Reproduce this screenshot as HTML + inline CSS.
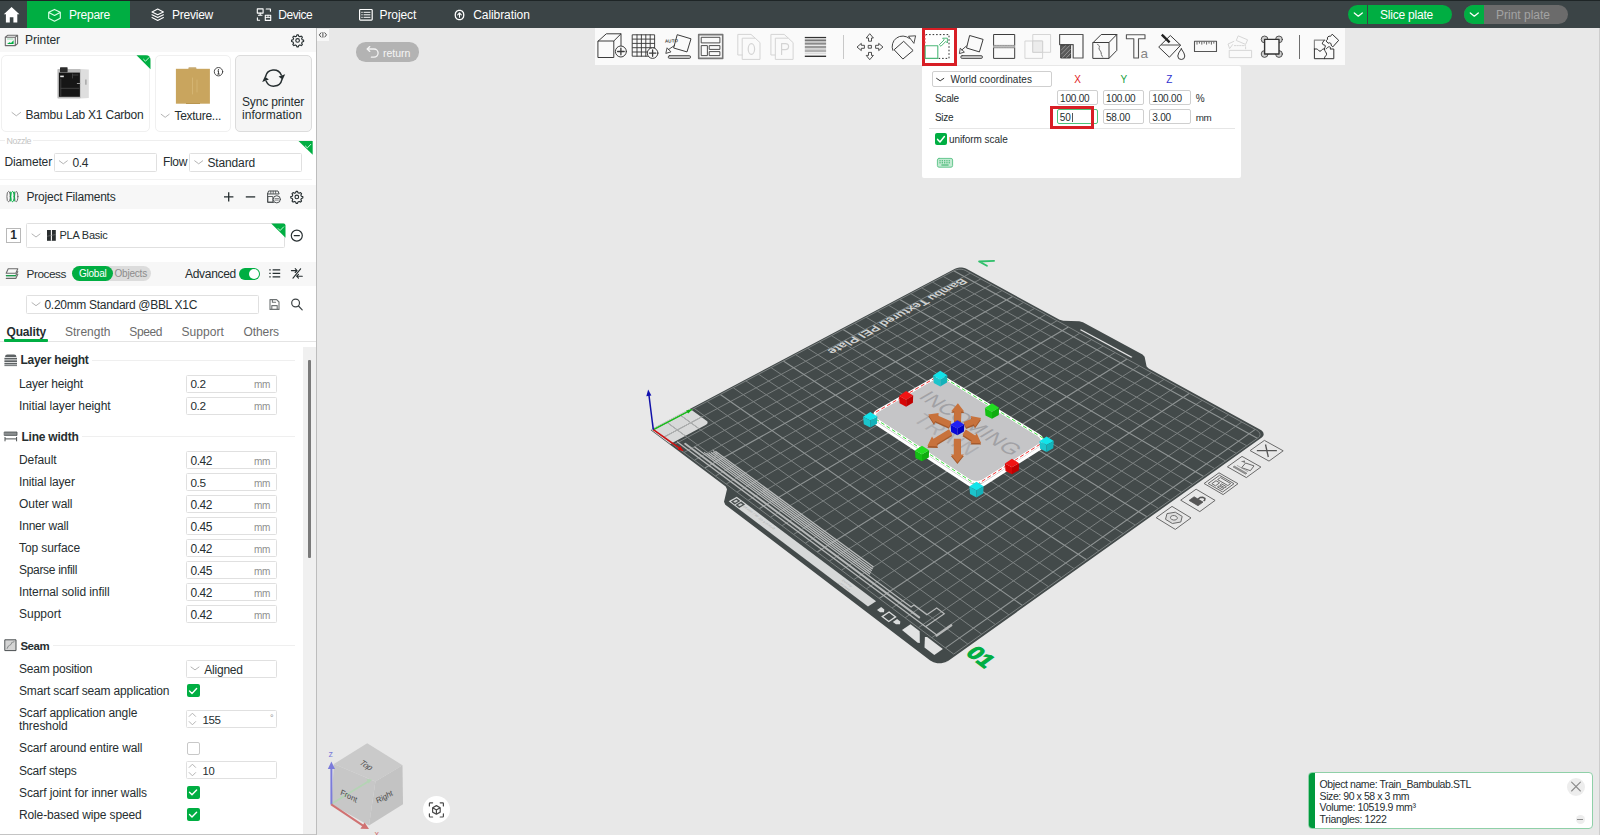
<!DOCTYPE html>
<html><head><meta charset="utf-8"><title>Bambu Studio</title>
<style>
*{box-sizing:border-box;margin:0;padding:0}
html,body{width:1600px;height:835px;overflow:hidden;background:#e8e8e8;font-family:"Liberation Sans",sans-serif;color:#262e30}
#root{position:relative;width:1600px;height:835px;overflow:hidden}
.a{position:absolute}
.t{position:absolute;white-space:nowrap;line-height:14px;height:14px}
.b{font-weight:bold}
#topbar{left:0;top:0;width:1600px;height:28px;background:#3b4446}
#side{left:0;top:28px;width:316px;height:807px;background:#fff}
.hdr{left:0;width:316px;background:#f7f7f7}
.box{border:1px solid #e0e0e0;background:#fff;border-radius:1.5px}
.card{border:1px solid #f0f0f0;background:#fff;border-radius:5px}
.chk{width:13px;height:13px;border-radius:2px;background:#00ae42}
.unchk{width:13px;height:13px;border-radius:2px;background:#fff;border:1px solid #c8c8c8}
.secline{height:1px;background:#efefef}
svg{position:absolute;overflow:visible}

</style></head><body><div id="root">
<!-- viewport -->
<svg class="a" style="left:0;top:0" width="1600" height="835" viewBox="0 0 1600 835">
<polygon points="651.0,429.6 955.0,268.7 955.0,268.7 957.1,267.9 959.5,267.5 962.0,267.5 964.4,267.9 966.4,268.8 1059.6,319.8 1063.3,320.8 1079.2,321.3 1082.9,322.2 1142.5,354.5 1144.6,356.7 1146.6,366.4 1148.7,368.5 1260.0,429.4 1262.0,430.8 1263.3,432.6 1263.7,434.4 1263.2,436.1 1261.8,437.5 944.2,663.7 948.5,660.6 945.2,662.3 941.3,663.2 937.3,663.2 933.5,662.2 930.2,660.4 725.3,504.7 724.0,501.8 727.0,489.2 725.7,486.4 650.8,430.3" fill="#434a4a"/>
<polygon points="650.8,429.4 689.9,408.7 706.5,420.7 706.5,420.7 707.3,421.4 707.6,422.4 707.4,423.3 706.7,424.2 705.6,425.0 670.3,444.0" fill="#d8d9d9"/>
<path d="M663.6,437.3L970.3,273.2M667.3,422.6L967.8,644.1M673.7,444.8L980.8,278.9M680.7,415.4L981.7,634.2M684.0,452.5L991.3,284.7M694.1,408.4L995.4,624.5M694.3,460.2L1002.0,290.5M707.2,401.4L1008.9,614.8M715.4,476.0L1023.6,302.4M733.2,387.7L1035.5,596.0M726.2,484.0L1034.6,308.4M745.9,380.9L1048.5,586.7M737.0,492.1L1045.7,314.5M758.5,374.2L1061.3,577.6M748.1,500.4L1057.0,320.7M771.0,367.6L1074.0,568.6M770.5,517.2L1079.8,333.2M795.5,354.6L1098.9,550.9M782.0,525.7L1091.5,339.6M807.6,348.2L1111.2,542.2M793.6,534.4L1103.2,346.0M819.6,341.9L1123.2,533.6M805.3,543.2L1115.1,352.5M831.4,335.6L1135.2,525.1M829.3,561.1L1139.3,365.8M854.7,323.3L1158.6,508.5M841.5,570.2L1151.6,372.5M866.1,317.2L1170.1,500.3M853.9,579.5L1164.0,379.4M877.5,311.2L1181.4,492.2M866.4,588.8L1176.6,386.3M888.7,305.3L1192.6,484.3M892.0,608.0L1202.2,400.3M910.8,293.6L1214.7,468.6M905.1,617.8L1215.3,407.5M921.7,287.8L1225.5,460.9M918.4,627.7L1228.5,414.7M932.5,282.1L1236.2,453.3M931.8,637.7L1241.8,422.0M943.1,276.4L1246.8,445.8" stroke="#7b8080" stroke-width="1" fill="none"/>
<path d="M704.8,468.0L1012.7,296.4M720.3,394.5L1022.3,605.4M759.2,508.7L1068.4,326.9M783.3,361.1L1086.6,559.7M817.2,552.1L1127.1,359.1M843.1,329.4L1146.9,516.8M879.1,598.4L1189.4,393.2M899.8,299.4L1203.7,476.4M945.4,647.9L1255.3,429.4M953.7,270.8L1257.3,438.3" stroke="#8f9494" stroke-width="1.15" fill="none"/>
<polygon points="653.6,429.8 954.8,270.3 954.8,270.3 956.6,269.6 958.8,269.2 961.1,269.2 963.3,269.6 965.1,270.3 1256.7,430.2 1258.5,431.5 1259.7,433.1 1260.1,434.7 1259.6,436.3 1258.3,437.6 953.7,654.1" fill="none" stroke="#7b8080" stroke-width="1"/>
<path d="M663.6,437.3L701.5,417.0M667.3,422.6L685.4,435.9M680.7,415.4L698.9,428.6" stroke="#b4b6b6" stroke-width="0.9" fill="none"/>
<polygon points="1079.9,329.9 1081.0,329.2 1132.5,356.9 1131.2,357.7" fill="#e4e4e4"/>
<polyline points="677.1,441.7 937.1,635.2" fill="none" stroke="#b6b8b8" stroke-width="1.3" stroke-linecap="butt" stroke-linejoin="miter"/>
<polyline points="936.6,635.6 951.3,625.3" fill="none" stroke="#b6b8b8" stroke-width="2.3" stroke-linecap="round" stroke-linejoin="miter"/>
<polyline points="685.2,443.8 919.2,617.4" fill="none" stroke="#b6b8b8" stroke-width="2.0" stroke-linecap="round" stroke-linejoin="miter"/>
<polyline points="694.4,446.8 911.1,607.0 913.9,605.1 926.9,614.8 936.7,608.1 944.3,613.7 925.8,626.4" fill="none" stroke="#b6b8b8" stroke-width="1.2" stroke-linecap="butt" stroke-linejoin="miter"/>
<path d="M706.5,453.5L870.1,574.2M708.8,452.9L870.9,572.4M711.0,452.3L871.8,570.7M713.2,451.8L872.7,568.9M715.4,451.2L873.5,567.1" stroke="#babcbc" stroke-width="1.25" fill="none"/>
<polyline points="704.0,452.1 713.5,459.1 717.1,453.0 712.7,450.1" fill="none" stroke="#b6b8b8" stroke-width="0.9" stroke-linecap="butt" stroke-linejoin="miter"/>
<polygon points="728.7,501.3 736.7,496.7 876.1,601.3 868.0,606.6" fill="#d6d8d8"/>
<polygon points="730.8,501.6 736.7,498.2 740.4,501.0 734.6,504.4" fill="#4a5050"/>
<polygon points="733.2,501.5 736.3,499.7 738.0,501.0 735.0,502.8" fill="#c8caca"/>
<polygon points="735.4,505.0 741.3,501.6 745.1,504.5 739.2,507.9" fill="#4a5050"/>
<polygon points="737.8,505.0 740.9,503.2 742.7,504.5 739.6,506.3" fill="#c8caca"/>
<polygon points="877.0,610.0 881.2,607.1 884.3,609.5 884.0,612.3 880.1,612.3" fill="#dadcdc"/>
<polygon points="882.2,616.6 889.1,612.0 895.6,616.9 888.8,621.5" fill="none" stroke="#dadcdc" stroke-width="1.3"/>
<polygon points="892.8,621.9 897.1,619.1 900.3,621.4 900.0,624.3 896.0,624.3" fill="#dadcdc"/>
<polygon points="902.0,630.1 910.5,624.3 919.7,631.2 919.8,642.9 917.7,642.8" fill="#e2e3e3"/>
<polygon points="924.9,637.1 927.1,637.1 942.9,648.9 934.3,654.9 924.5,647.5" fill="#e2e3e3"/>
<g font-family="Liberation Sans, sans-serif">
<text transform="matrix(-1.0545 0.5645 -1.0378 -0.5742 961.60 278.28)" font-size="9.64" font-weight="bold" fill="#d0d2d2" fill-opacity="1">B</text><text transform="matrix(-1.0619 0.5684 -1.0375 -0.5783 954.22 282.23)" font-size="9.64" font-weight="bold" fill="#d0d2d2" fill-opacity="1">a</text><text transform="matrix(-1.0677 0.5715 -1.0373 -0.5815 948.49 285.30)" font-size="9.64" font-weight="bold" fill="#d0d2d2" fill-opacity="1">m</text><text transform="matrix(-1.0770 0.5765 -1.0369 -0.5867 939.28 290.23)" font-size="9.64" font-weight="bold" fill="#d0d2d2" fill-opacity="1">b</text><text transform="matrix(-1.0834 0.5800 -1.0365 -0.5903 932.90 293.64)" font-size="9.64" font-weight="bold" fill="#d0d2d2" fill-opacity="1">u</text><text transform="matrix(-1.0929 0.5850 -1.0361 -0.5955 923.54 298.65)" font-size="9.64" font-weight="bold" fill="#d0d2d2" fill-opacity="1">T</text><text transform="matrix(-1.0995 0.5886 -1.0357 -0.5992 917.06 302.12)" font-size="9.64" font-weight="bold" fill="#d0d2d2" fill-opacity="1">e</text><text transform="matrix(-1.1056 0.5918 -1.0353 -0.6026 911.13 305.29)" font-size="9.64" font-weight="bold" fill="#d0d2d2" fill-opacity="1">x</text><text transform="matrix(-1.1117 0.5951 -1.0350 -0.6060 905.17 308.49)" font-size="9.64" font-weight="bold" fill="#d0d2d2" fill-opacity="1">t</text><text transform="matrix(-1.1154 0.5971 -1.0347 -0.6080 901.57 310.41)" font-size="9.64" font-weight="bold" fill="#d0d2d2" fill-opacity="1">u</text><text transform="matrix(-1.1222 0.6007 -1.0343 -0.6118 894.96 313.95)" font-size="9.64" font-weight="bold" fill="#d0d2d2" fill-opacity="1">r</text><text transform="matrix(-1.1266 0.6031 -1.0340 -0.6142 890.72 316.22)" font-size="9.64" font-weight="bold" fill="#d0d2d2" fill-opacity="1">e</text><text transform="matrix(-1.1329 0.6064 -1.0335 -0.6177 884.65 319.47)" font-size="9.64" font-weight="bold" fill="#d0d2d2" fill-opacity="1">d</text><text transform="matrix(-1.1430 0.6119 -1.0328 -0.6234 874.85 324.71)" font-size="9.64" font-weight="bold" fill="#d0d2d2" fill-opacity="1">P</text><text transform="matrix(-1.1507 0.6160 -1.0322 -0.6276 867.46 328.67)" font-size="9.64" font-weight="bold" fill="#d0d2d2" fill-opacity="1">E</text><text transform="matrix(-1.1585 0.6202 -1.0315 -0.6320 860.02 332.66)" font-size="9.64" font-weight="bold" fill="#d0d2d2" fill-opacity="1">I</text><text transform="matrix(-1.1651 0.6237 -1.0310 -0.6356 853.75 336.01)" font-size="9.64" font-weight="bold" fill="#d0d2d2" fill-opacity="1">P</text><text transform="matrix(-1.1730 0.6279 -1.0303 -0.6400 846.21 340.05)" font-size="9.64" font-weight="bold" fill="#d0d2d2" fill-opacity="1">l</text><text transform="matrix(-1.1764 0.6297 -1.0300 -0.6419 843.04 341.74)" font-size="9.64" font-weight="bold" fill="#d0d2d2" fill-opacity="1">a</text><text transform="matrix(-1.1831 0.6333 -1.0294 -0.6456 836.69 345.14)" font-size="9.64" font-weight="bold" fill="#d0d2d2" fill-opacity="1">t</text><text transform="matrix(-1.1872 0.6355 -1.0290 -0.6479 832.87 347.19)" font-size="9.64" font-weight="bold" fill="#d0d2d2" fill-opacity="1">e</text>
<text transform="matrix(1.1106 0.8352 1.3993 -0.8157 744.41 505.45)" font-size="2.23" font-weight="normal" fill="#a8aaaa" fill-opacity="1">B</text><text transform="matrix(1.1130 0.8370 1.3997 -0.8175 746.29 506.86)" font-size="2.23" font-weight="normal" fill="#a8aaaa" fill-opacity="1">a</text><text transform="matrix(1.1150 0.8385 1.4000 -0.8189 747.90 508.07)" font-size="2.23" font-weight="normal" fill="#a8aaaa" fill-opacity="1">m</text><text transform="matrix(1.1179 0.8407 1.4004 -0.8211 750.20 509.80)" font-size="2.23" font-weight="normal" fill="#a8aaaa" fill-opacity="1">b</text><text transform="matrix(1.1200 0.8423 1.4007 -0.8225 751.81 511.01)" font-size="2.23" font-weight="normal" fill="#a8aaaa" fill-opacity="1">u</text><text transform="matrix(1.1232 0.8447 1.4012 -0.8249 754.35 512.92)" font-size="2.23" font-weight="normal" fill="#a8aaaa" fill-opacity="1">L</text><text transform="matrix(1.1253 0.8462 1.4015 -0.8264 755.98 514.14)" font-size="2.23" font-weight="normal" fill="#a8aaaa" fill-opacity="1">a</text><text transform="matrix(1.1274 0.8478 1.4019 -0.8279 757.60 515.37)" font-size="2.23" font-weight="normal" fill="#a8aaaa" fill-opacity="1">b</text><text transform="matrix(1.1307 0.8503 1.4023 -0.8303 760.16 517.29)" font-size="2.23" font-weight="normal" fill="#a8aaaa" fill-opacity="1">3</text><text transform="matrix(1.1328 0.8518 1.4026 -0.8318 761.79 518.52)" font-size="2.23" font-weight="normal" fill="#a8aaaa" fill-opacity="1">D</text><text transform="matrix(1.1366 0.8547 1.4032 -0.8346 764.78 520.76)" font-size="2.23" font-weight="normal" fill="#a8aaaa" fill-opacity="1">P</text><text transform="matrix(1.1391 0.8566 1.4036 -0.8363 766.70 522.21)" font-size="2.23" font-weight="normal" fill="#a8aaaa" fill-opacity="1">r</text><text transform="matrix(1.1405 0.8576 1.4038 -0.8373 767.78 523.02)" font-size="2.23" font-weight="normal" fill="#a8aaaa" fill-opacity="1">i</text><text transform="matrix(1.1415 0.8584 1.4039 -0.8381 768.57 523.62)" font-size="2.23" font-weight="normal" fill="#a8aaaa" fill-opacity="1">n</text><text transform="matrix(1.1436 0.8600 1.4042 -0.8396 770.22 524.86)" font-size="2.23" font-weight="normal" fill="#a8aaaa" fill-opacity="1">t</text><text transform="matrix(1.1448 0.8609 1.4044 -0.8405 771.16 525.56)" font-size="2.23" font-weight="normal" fill="#a8aaaa" fill-opacity="1">i</text><text transform="matrix(1.1459 0.8617 1.4045 -0.8412 771.96 526.16)" font-size="2.23" font-weight="normal" fill="#a8aaaa" fill-opacity="1">n</text><text transform="matrix(1.1480 0.8633 1.4048 -0.8428 773.61 527.41)" font-size="2.23" font-weight="normal" fill="#a8aaaa" fill-opacity="1">g</text>
<text transform="matrix(1.2394 0.9317 1.4152 -0.9086 843.24 579.37)" font-size="1.82" font-weight="normal" fill="#a8aaaa" fill-opacity="1">S</text><text transform="matrix(1.2417 0.9335 1.4154 -0.9103 844.99 580.69)" font-size="1.82" font-weight="normal" fill="#a8aaaa" fill-opacity="1">m</text><text transform="matrix(1.2446 0.9357 1.4157 -0.9123 847.12 582.29)" font-size="1.82" font-weight="normal" fill="#a8aaaa" fill-opacity="1">o</text><text transform="matrix(1.2466 0.9372 1.4159 -0.9138 848.63 583.42)" font-size="1.82" font-weight="normal" fill="#a8aaaa" fill-opacity="1">o</text><text transform="matrix(1.2486 0.9387 1.4161 -0.9153 850.14 584.56)" font-size="1.82" font-weight="normal" fill="#a8aaaa" fill-opacity="1">t</text><text transform="matrix(1.2498 0.9396 1.4162 -0.9161 851.02 585.22)" font-size="1.82" font-weight="normal" fill="#a8aaaa" fill-opacity="1">h</text>
<text transform="matrix(1.2389 0.9349 1.4199 -0.9116 839.56 581.74)" font-size="1.82" font-weight="normal" fill="#a8aaaa" fill-opacity="1">T</text><text transform="matrix(1.2411 0.9365 1.4201 -0.9132 841.18 582.97)" font-size="1.82" font-weight="normal" fill="#a8aaaa" fill-opacity="1">e</text><text transform="matrix(1.2431 0.9380 1.4203 -0.9146 842.68 584.10)" font-size="1.82" font-weight="normal" fill="#a8aaaa" fill-opacity="1">x</text><text transform="matrix(1.2450 0.9394 1.4205 -0.9160 844.06 585.14)" font-size="1.82" font-weight="normal" fill="#a8aaaa" fill-opacity="1">t</text><text transform="matrix(1.2462 0.9403 1.4206 -0.9168 844.94 585.80)" font-size="1.82" font-weight="normal" fill="#a8aaaa" fill-opacity="1">u</text><text transform="matrix(1.2482 0.9419 1.4208 -0.9183 846.45 586.94)" font-size="1.82" font-weight="normal" fill="#a8aaaa" fill-opacity="1">r</text><text transform="matrix(1.2496 0.9429 1.4209 -0.9193 847.45 587.70)" font-size="1.82" font-weight="normal" fill="#a8aaaa" fill-opacity="1">e</text><text transform="matrix(1.2516 0.9444 1.4211 -0.9208 848.96 588.84)" font-size="1.82" font-weight="normal" fill="#a8aaaa" fill-opacity="1">d</text>
<polygon points="1250.1,450.6 1269.0,461.1 1283.2,450.8 1264.4,440.4" fill="none" stroke="#6a6a6a" stroke-width="1"/><polyline points="1256.9,450.6 1276.9,450.7" stroke="#555" stroke-width="1.3" fill="none"/><polyline points="1265.5,444.5 1268.3,457.0" stroke="#555" stroke-width="1.3" fill="none"/>
<polygon points="1227.4,466.8 1246.3,477.6 1260.9,467.0 1242.0,456.4" fill="none" stroke="#6a6a6a" stroke-width="1"/><polygon points="1241.6,467.7 1250.4,470.7 1254.0,465.9 1245.6,463.0" fill="none" stroke="#6a6a6a" stroke-width="1"/><polygon points="1233.1,467.0 1245.6,474.2 1246.9,473.2 1234.4,466.1" fill="#9a9a9a" stroke="#6a6a6a" stroke-width="0.6"/><polygon points="1240.8,461.2 1245.0,460.6 1245.1,463.0" fill="#777" stroke="none"/><polyline points="1236.9,465.3 1248.1,471.7" stroke="#8a8a8a" stroke-width="0.7" fill="none"/>
<polygon points="1204.1,483.5 1223.1,494.6 1238.0,483.7 1219.0,472.8" fill="none" stroke="#6a6a6a" stroke-width="1"/><polygon points="1208.1,483.5 1222.6,492.0 1234.0,483.7 1219.5,475.3" fill="none" stroke="#6a6a6a" stroke-width="1"/><polygon points="1217.6,479.6 1227.9,485.6 1230.7,483.5 1220.4,477.5" fill="none" stroke="#6a6a6a" stroke-width="1"/><polygon points="1211.8,483.7 1215.5,485.8 1219.6,482.8 1216.0,480.7" fill="none" stroke="#6a6a6a" stroke-width="1"/><polygon points="1220.1,485.0 1224.8,487.8 1226.4,486.7 1221.6,483.9" fill="none" stroke="#6a6a6a" stroke-width="1"/><polygon points="1217.4,486.9 1222.2,489.7 1223.7,488.6 1219.0,485.8" fill="none" stroke="#6a6a6a" stroke-width="1"/>
<polygon points="1180.7,500.2 1199.8,511.6 1215.1,500.4 1196.1,489.2" fill="none" stroke="#6a6a6a" stroke-width="1"/><polygon points="1189.1,500.4 1198.0,505.7 1203.0,502.1 1194.1,496.8" fill="#555" stroke="#555" stroke-width="0.8"/><polyline points="1198.0,499.1 1200.2,497.5 1202.7,497.2 1204.9,498.5 1204.7,500.2 1203.6,501.0" fill="none" stroke="#555" stroke-width="1.5"/>
<polygon points="1156.2,517.7 1175.3,529.4 1191.0,517.9 1172.0,506.4" fill="none" stroke="#6a6a6a" stroke-width="1"/><polygon points="1180.8,522.0 1182.2,516.4 1175.3,512.2 1167.0,513.6 1165.5,519.3 1172.4,523.5" fill="#dcdcdc" stroke="#6a6a6a" stroke-width="1"/><polygon points="1176.5,519.4 1177.3,518.4 1177.1,517.2 1176.1,516.2 1174.4,515.6 1172.7,515.6 1171.2,516.2 1170.5,517.2 1170.6,518.4 1171.7,519.4 1173.3,520.0 1175.1,520.0" fill="#e8e8e8" stroke="#6a6a6a" stroke-width="1"/>
<text transform="matrix(1.3920 1.0345 -1.4099 1.0072 964.91 653.80)" font-size="12.57" font-weight="bold" fill="#00ae42" fill-opacity="1" stroke="#00ae42" stroke-width="0.7">0</text><text transform="matrix(1.4061 1.0449 -1.4103 1.0173 974.83 661.17)" font-size="12.57" font-weight="bold" fill="#00ae42" fill-opacity="1" stroke="#00ae42" stroke-width="0.7">1</text>
<polyline points="994.1,260.8 979.1,261.5 986.9,265.8" fill="none" stroke="#2fbf6a" stroke-width="1.8" stroke-linejoin="round" stroke-linecap="round"/>
<polygon points="968.9,484.2 970.5,485.1 972.3,485.7 974.3,486.1 976.3,486.3 978.4,486.1 980.4,485.8 982.2,485.2 983.8,484.3 1039.2,448.9 1040.4,447.9 1041.3,446.8 1041.8,445.6 1042.0,444.3 1041.7,443.1 1041.1,441.9 1040.1,440.8 1038.8,439.8 946.7,383.5 945.2,382.8 943.5,382.2 941.7,381.9 939.8,381.8 937.9,381.9 936.1,382.2 934.4,382.7 932.9,383.4 877.7,415.3 876.4,416.2 875.4,417.3 874.7,418.4 874.4,419.6 874.5,420.8 875.0,422.0 875.8,423.0 877.0,424.0" fill="#b4b4b6" stroke="#ffffff" stroke-width="3.2" stroke-linejoin="round"/>
<polygon points="969.0,480.0 970.6,480.9 972.4,481.5 974.4,481.9 976.4,482.1 978.5,481.9 980.5,481.6 982.3,481.0 983.9,480.1 1039.4,444.7 1040.6,443.7 1041.5,442.6 1042.1,441.4 1042.2,440.1 1041.9,438.9 1041.3,437.7 1040.3,436.6 1039.0,435.6 946.7,379.3 945.2,378.6 943.6,378.0 941.8,377.7 939.9,377.6 938.0,377.7 936.1,378.0 934.4,378.5 932.9,379.2 877.6,411.1 876.3,412.0 875.3,413.1 874.6,414.2 874.3,415.4 874.4,416.6 874.9,417.8 875.7,418.8 876.9,419.8" fill="#c5c5c7" stroke="#ffffff" stroke-width="3" stroke-linejoin="round"/>
<polygon points="969.7,478.9 971.1,479.7 972.8,480.2 974.6,480.6 976.4,480.7 978.3,480.6 980.1,480.3 981.7,479.7 983.1,479.0 1037.7,444.2 1038.8,443.3 1039.6,442.3 1040.1,441.3 1040.2,440.1 1040.0,439.0 1039.4,437.9 1038.5,436.9 1037.3,436.1 946.0,380.3 944.7,379.6 943.2,379.1 941.5,378.8 939.8,378.7 938.1,378.8 936.5,379.1 934.9,379.5 933.6,380.2 879.2,411.5 878.0,412.4 877.1,413.3 876.5,414.3 876.3,415.4 876.4,416.5 876.8,417.5 877.5,418.5 878.6,419.3" fill="#c5c5c7"/>
<g transform="translate(0 -4.2)">
<text transform="matrix(1.1273 0.7104 -1.1960 0.6957 917.71 401.68)" font-size="15.08" font-weight="normal" fill="#98989c" fill-opacity="0.8">I</text><text transform="matrix(1.1332 0.7141 -1.1963 0.6993 922.79 404.88)" font-size="15.08" font-weight="normal" fill="#98989c" fill-opacity="0.8">N</text><text transform="matrix(1.1483 0.7236 -1.1971 0.7084 935.56 412.93)" font-size="15.08" font-weight="normal" fill="#98989c" fill-opacity="0.8">C</text><text transform="matrix(1.1637 0.7333 -1.1978 0.7178 948.49 421.08)" font-size="15.08" font-weight="normal" fill="#98989c" fill-opacity="0.8">O</text><text transform="matrix(1.1805 0.7439 -1.1984 0.7280 962.60 429.97)" font-size="15.08" font-weight="normal" fill="#98989c" fill-opacity="0.8">M</text><text transform="matrix(1.1990 0.7556 -1.1990 0.7392 977.90 439.61)" font-size="15.08" font-weight="normal" fill="#98989c" fill-opacity="0.8">I</text><text transform="matrix(1.2055 0.7597 -1.1991 0.7432 983.30 443.02)" font-size="15.08" font-weight="normal" fill="#98989c" fill-opacity="0.8">N</text><text transform="matrix(1.2221 0.7701 -1.1995 0.7532 996.89 451.58)" font-size="15.08" font-weight="normal" fill="#98989c" fill-opacity="0.8">G</text>
<text transform="matrix(1.1447 0.7372 -1.2215 0.7215 911.86 424.57)" font-size="15.08" font-weight="normal" fill="#98989c" fill-opacity="0.5">T</text><text transform="matrix(1.1582 0.7459 -1.2222 0.7299 923.16 431.84)" font-size="15.08" font-weight="normal" fill="#98989c" fill-opacity="0.5">R</text><text transform="matrix(1.1744 0.7564 -1.2231 0.7400 936.56 440.48)" font-size="15.08" font-weight="normal" fill="#98989c" fill-opacity="0.5">A</text><text transform="matrix(1.1897 0.7662 -1.2237 0.7494 949.16 448.59)" font-size="15.08" font-weight="normal" fill="#98989c" fill-opacity="0.5">I</text><text transform="matrix(1.1967 0.7707 -1.2240 0.7538 954.88 452.27)" font-size="15.08" font-weight="normal" fill="#98989c" fill-opacity="0.5">N</text>
</g>
<line x1="939.9" y1="375.2" x2="1046.4" y2="440.2" stroke="#3fe03f" stroke-width="1" stroke-dasharray="4 2.5"/>
<line x1="870.2" y1="415.4" x2="976.4" y2="484.9" stroke="#3fe03f" stroke-width="1" stroke-dasharray="4 2.5"/>
<line x1="870.2" y1="415.4" x2="939.9" y2="375.2" stroke="#f03030" stroke-width="1" stroke-dasharray="4 2.5"/>
<line x1="976.4" y1="484.9" x2="1046.4" y2="440.2" stroke="#f03030" stroke-width="1" stroke-dasharray="4 2.5"/>
<polygon points="948.9,427.2 935.1,421.0 934.0,423.5 928.2,414.5 938.8,412.9 937.7,415.4 951.4,421.6" fill="#a55a2c" transform="translate(0 1.6)"/><polygon points="948.9,427.2 935.1,421.0 934.0,423.5 928.2,414.5 938.8,412.9 937.7,415.4 951.4,421.6" fill="#c8723c"/>
<polygon points="963.7,421.9 971.6,418.7 970.6,416.1 981.1,418.1 974.9,426.9 973.9,424.3 966.0,427.5" fill="#a55a2c" transform="translate(0 1.6)"/><polygon points="963.7,421.9 971.6,418.7 970.6,416.1 981.1,418.1 974.9,426.9 973.9,424.3 966.0,427.5" fill="#c8723c"/>
<polygon points="954.0,420.6 954.2,411.2 951.2,411.2 957.9,403.3 964.2,411.4 961.2,411.4 961.0,420.8" fill="#a55a2c" transform="translate(0 1.6)"/><polygon points="954.0,420.6 954.2,411.2 951.2,411.2 957.9,403.3 964.2,411.4 961.2,411.4 961.0,420.8" fill="#c8723c"/>
<polygon points="952.2,434.5 936.7,444.0 938.1,446.3 927.4,446.1 932.0,436.5 933.5,438.8 949.0,429.3" fill="#a55a2c" transform="translate(0 1.6)"/><polygon points="952.2,434.5 936.7,444.0 938.1,446.3 927.4,446.1 932.0,436.5 933.5,438.8 949.0,429.3" fill="#c8723c"/>
<polygon points="965.8,429.5 975.2,435.6 976.7,433.2 981.1,443.0 970.4,443.0 971.9,440.7 962.5,434.6" fill="#a55a2c" transform="translate(0 1.6)"/><polygon points="965.8,429.5 975.2,435.6 976.7,433.2 981.1,443.0 970.4,443.0 971.9,440.7 962.5,434.6" fill="#c8723c"/>
<polygon points="960.9,438.7 960.9,454.4 963.9,454.4 957.4,462.4 950.9,454.4 953.9,454.4 953.9,438.7" fill="#a55a2c" transform="translate(0 1.6)"/><polygon points="960.9,438.7 960.9,454.4 963.9,454.4 957.4,462.4 950.9,454.4 953.9,454.4 953.9,438.7" fill="#c8723c"/>
<polygon points="940.2,370.8 947.4,375.3 940.2,379.4 933.1,375.6" fill="#12e4ea"/><polygon points="933.1,375.6 940.2,379.4 940.3,386.4 933.8,383.0" fill="#1cc4cc"/><polygon points="940.2,379.4 947.4,375.3 947.0,382.5 940.3,386.4" fill="#14b2ba"/>
<polygon points="870.3,412.0 877.4,416.5 870.2,420.6 863.1,416.8" fill="#12e4ea"/><polygon points="863.1,416.8 870.2,420.6 870.3,427.6 863.8,424.2" fill="#1cc4cc"/><polygon points="870.2,420.6 877.4,416.5 877.0,423.7 870.3,427.6" fill="#14b2ba"/>
<polygon points="1046.6,436.5 1053.8,441.0 1046.5,445.1 1039.4,441.3" fill="#12e4ea"/><polygon points="1039.4,441.3 1046.5,445.1 1046.6,452.1 1040.1,448.7" fill="#1cc4cc"/><polygon points="1046.5,445.1 1053.8,441.0 1053.3,448.2 1046.6,452.1" fill="#14b2ba"/>
<polygon points="976.5,481.8 983.6,486.3 976.5,490.4 969.4,486.6" fill="#12e4ea"/><polygon points="969.4,486.6 976.5,490.4 976.5,497.4 970.0,494.0" fill="#1cc4cc"/><polygon points="976.5,490.4 983.6,486.3 983.2,493.5 976.5,497.4" fill="#14b2ba"/>
<polygon points="906.1,391.1 913.2,395.6 906.1,399.7 899.0,395.9" fill="#f01414"/><polygon points="899.0,395.9 906.1,399.7 906.1,406.7 899.6,403.3" fill="#d60606"/><polygon points="906.1,399.7 913.2,395.6 912.9,402.8 906.1,406.7" fill="#c00000"/>
<polygon points="1012.0,458.7 1019.1,463.2 1012.0,467.3 1004.9,463.5" fill="#f01414"/><polygon points="1004.9,463.5 1012.0,467.3 1012.0,474.3 1005.5,470.9" fill="#d60606"/><polygon points="1012.0,467.3 1019.1,463.2 1018.8,470.4 1012.0,474.3" fill="#c00000"/>
<polygon points="992.0,403.2 999.1,407.7 992.0,411.8 984.9,408.0" fill="#22dc22"/><polygon points="984.9,408.0 992.0,411.8 992.0,418.8 985.5,415.4" fill="#14c014"/><polygon points="992.0,411.8 999.1,407.7 998.8,414.9 992.0,418.8" fill="#10ac10"/>
<polygon points="922.0,445.7 929.1,450.2 922.0,454.3 914.9,450.5" fill="#22dc22"/><polygon points="914.9,450.5 922.0,454.3 922.0,461.3 915.5,457.9" fill="#14c014"/><polygon points="922.0,454.3 929.1,450.2 928.8,457.4 922.0,461.3" fill="#10ac10"/>
<polygon points="957.4,420.2 964.3,424.5 957.4,428.5 950.5,424.8" fill="#2020f4"/><polygon points="950.5,424.8 957.4,428.5 957.4,435.2 951.2,431.9" fill="#0808d8"/><polygon points="957.4,428.5 964.3,424.5 963.9,431.4 957.4,435.2" fill="#0000c0"/>
<line x1="653.3" y1="429.7" x2="691.6" y2="409.6" stroke="#18c018" stroke-width="1.3"/><polygon points="686.2,410.4 692.6,409 688.2,413.4" fill="#10b010"/>
<line x1="653.3" y1="429.7" x2="679.5" y2="448.2" stroke="#d01010" stroke-width="1.5"/><polygon points="677.6,449.6 680.4,446.2 683.6,451.2" fill="#d80c0c"/>
<line x1="653.3" y1="429.7" x2="648.8" y2="394" stroke="#1010a8" stroke-width="1.5"/><polygon points="646.3,396.2 651.4,395.6 648.2,389.6" fill="#1010b0"/>
<g>
<polygon points="367.2,743.2 402.5,765.2 375.4,781.5 333.9,764.0" fill="#cacaca"/><polygon points="333.9,764.0 375.4,781.5 369.0,825.6 331.4,804.2" fill="#c7c7c7"/><polygon points="375.4,781.5 402.5,765.2 403.0,804.2 369.0,825.6" fill="#c3c3c3"/>
<line x1="331.4" y1="804" x2="369" y2="781" stroke="#b4d4b4" stroke-width="1.6"/><polygon points="366.5,779 372,779.6 368.6,783.6" fill="#b4d4b4"/>
<line x1="331.4" y1="804.6" x2="331.4" y2="768" stroke="#7b7bda" stroke-width="2"/><polygon points="327.8,769 335,769 331.4,761.6" fill="#7b7bda"/>
<line x1="331.2" y1="804.4" x2="363" y2="825.6" stroke="#d07272" stroke-width="2"/><polygon points="360.4,828.8 364.6,822.4 369,829" fill="#d07272"/>
<text x="328.4" y="757.4" font-size="9" fill="#7b7bda">z</text><text x="374.6" y="837.4" font-size="9" fill="#d07272">x</text>
<text transform="translate(358.6 763.4) rotate(33) skewX(-20)" font-size="8.2" fill="#4a4a4a">Top</text>
<text transform="translate(340 794.4) rotate(27) skewX(10)" font-size="7.8" fill="#4a4a4a">Front</text>
<text transform="translate(377.2 803.6) rotate(-28) skewX(-8)" font-size="7.8" fill="#4a4a4a">Right</text>
</g>
</g>
</svg>
<!-- collapse -->
<div class="a" style="left:317.4px;top:28.6px;width:11.4px;height:12.4px;background:#f7f7f7"></div>
<!-- return -->
<div class="a" style="left:356px;top:42.2px;width:63.3px;height:19.4px;border-radius:9.7px;background:#b3b3b3"></div>
<!-- toolbar -->
<div class="a" style="left:594.5px;top:28px;width:750.5px;height:37px;background:#fafafa"></div>
<div class="a" style="left:843px;top:35px;width:1px;height:24px;background:#c8c8c8"></div>
<div class="a" style="left:1299px;top:35px;width:1px;height:24px;background:#6e6e6e"></div>
<div class="a" style="left:922px;top:27.4px;width:34.6px;height:38.2px;border:3px solid #d81e25;background:#fff"></div>
<svg class="a" style="left:0;top:0" width="1600" height="70" viewBox="0 0 1600 70" fill="none" stroke="#3c3c3c" stroke-width="1" stroke-linejoin="round" stroke-linecap="round">
<!-- 1 add cube -->
<path d="M598.3 41 H613.8 V57.5 H598.3 Z M598.3 41 L606.3 33.8 H621 L613.8 41 M621 33.8 V46"/>
<circle cx="620.9" cy="51.5" r="5.5" fill="#fafafa"/><path d="M617.6 51.5 H624.2 M620.9 48.2 V54.8" stroke-width="1.3"/>
<!-- 2 grid add -->
<path d="M632.6 34.8 H654.6 V56.2 H632.6 Z M637 34.8 V56.2 M641.4 34.8 V56.2 M645.8 34.8 V56.2 M650.2 34.8 V56.2 M632.6 39.1 H654.6 M632.6 43.4 H654.6 M632.6 47.7 H654.6 M632.6 52 H654.6" stroke-width="0.95"/>
<circle cx="652.6" cy="53.1" r="5.3" fill="#fafafa"/><path d="M649.4 53.1 H655.8 M652.6 49.9 V56.3" stroke-width="1.3"/>
<!-- 3 auto orient -->
<path d="M677.6 34.8 L691 38.8 L687 51.9 L674 48.1 Z"/>
<path d="M674.6 45.4 L668.4 49.6 M670.6 52 L665.8 53.4 L667 48.2 Z" stroke-width="0.9"/>
<text x="665" y="42.6" font-family="Liberation Sans, sans-serif" font-size="4.6" font-weight="bold" fill="#4a4a4a" stroke="none" transform="rotate(-3 670 42)">AUTO</text>
<rect x="668.2" y="55.6" width="22.4" height="2.9" rx="1.45" fill="#c6c6c6" stroke-width="0.8"/>
<!-- 4 arrange -->
<rect x="698.7" y="34.6" width="24" height="23.8" stroke="#777" stroke-width="1.6"/>
<rect x="701.6" y="37.3" width="18.3" height="5.6" stroke-width="0.9"/><rect x="701.6" y="45.6" width="5.8" height="10" stroke-width="0.9"/><rect x="709.6" y="45.6" width="10.3" height="3.8" stroke-width="0.9"/><rect x="709.6" y="51.6" width="10.3" height="4" stroke-width="0.9"/>
<!-- 5,6 disabled copy/paste -->
<g stroke="#d4d4d4"><path d="M738.2 34.4 H751 L755.6 38.6 V55 H738.2 Z" /><path d="M742.6 38.2 H755.2 L760 42.6 V59.4 H742.6 Z" fill="#fafafa"/>
<ellipse cx="751.4" cy="49" rx="3.2" ry="5.4" stroke-width="1.2"/>
<path d="M771.3 34.4 H784.2 L788.8 38.6 V55 H771.3 Z" /><path d="M775.7 38.2 H788.3 L793.1 42.6 V59.4 H775.7 Z" fill="#fafafa"/>
<path d="M781.6 54.4 V43.6 H785.4 Q788.6 43.6 788.6 46.6 Q788.6 49.6 785.4 49.6 H781.6" stroke-width="1.2"/></g>
<!-- 7 layers -->
<g stroke="none"><rect x="804.8" y="36.9" width="21.3" height="1.3" fill="#333"/><rect x="804.8" y="39.4" width="21.3" height="2" fill="#777"/><rect x="804.8" y="42.5" width="21.3" height="2.2" fill="#8a8a8a"/><rect x="804.8" y="45.8" width="21.3" height="2.6" fill="#999"/><rect x="804.8" y="49.4" width="21.3" height="2.8" fill="#b0b0b0"/><rect x="804.8" y="53.2" width="21.3" height="1" fill="#d8d8d8"/><rect x="804.8" y="55.6" width="21.3" height="1.4" fill="#333"/></g>
<!-- 8 move -->
<g stroke-width="0.9"><rect x="868.6" y="45.4" width="2.8" height="2.8"/>
<path d="M870 34 L873.4 38 H871.5 V41.2 H868.5 V38 H866.6 Z"/><path d="M870 59.4 L873.4 55.4 H871.5 V52.4 H868.5 V55.4 H866.6 Z"/>
<path d="M857.3 46.8 L861.3 43.4 V45.3 H864.4 V48.3 H861.3 V50.2 Z"/><path d="M882.7 46.8 L878.7 43.4 V45.3 H875.6 V48.3 H878.7 V50.2 Z"/></g>
<!-- 9 rotate -->
<path d="M894.4 49.5 L903.7 41.3 L913.1 50.5 L903.2 58.8 Z"/>
<path d="M892.8 50.4 A10.6 10.6 0 0 1 909.4 38.4" stroke-width="0.95"/><path d="M908.9 36.2 L915.6 35.8 L914 43 Z" stroke-width="0.9"/>
<!-- 10 scale (selected) -->
<path d="M925.6 34.6 H949 V58.4 H938" stroke="#2f2f2f" stroke-dasharray="1.6 1.9" stroke-linecap="butt"/>
<path d="M925.2 34.6 V45" stroke="#e07070" stroke-dasharray="1.6 1.9" stroke-linecap="butt"/>
<path d="M925.2 45.7 H937.8 V58.4 H925.2 Z" stroke="#4cb878" stroke-width="1.1"/>
<path d="M939.6 44.4 L944.2 39.8 L942.6 38.2 H947.4 V43 L945.8 41.4 L941.2 46 Z" stroke="#3fb06c" stroke-width="0.9"/>
<!-- 11 lay flat -->
<path d="M970 35.6 L983.1 39.4 L979.4 51.9 L966.9 48.1 Z"/>
<path d="M966.4 46 L961.8 50 M964 52.2 L959.4 53.6 L960.2 48.6 Z" stroke-width="0.9"/>
<rect x="960.7" y="55.6" width="21.8" height="2.9" rx="1.45" fill="#c6c6c6" stroke-width="0.8"/>
<!-- 12 cut -->
<path d="M993.6 45 V34.5 H1014.7 V45 M993.6 48.2 V58.4 H1014.7 V48.2"/><rect x="993.6" y="45.4" width="21.1" height="2.4" fill="#bdbdbd" stroke="#777" stroke-width="0.7" stroke-dasharray="0.8 0.8"/>
<!-- 13 boolean disabled -->
<g stroke="#d0d0d0" stroke-width="0.9"><rect x="1033.2" y="34.5" width="17.4" height="17.8"/><rect x="1025.3" y="41" width="17.3" height="17.4"/><path d="M1033.2 41 H1042.6 V52.3 H1033.2 Z" fill="#ececec"/></g>
<!-- 14 support paint -->
<path d="M1059.6 34.5 H1083 V58 H1073.2 V44.6 H1059.6 Z" stroke="#555" stroke-width="1.2"/>
<rect x="1061" y="45.2" width="9.6" height="12.8" fill="#5a5a5a" stroke="#333" stroke-width="0.9"/>
<path d="M1061.4 50 L1065.6 45.6 M1061.4 54 L1069.6 45.6 M1062.6 57.6 L1070.4 49.4 M1066.6 57.6 L1070.4 53.6" stroke="#bbb" stroke-width="0.6"/>
<!-- 15 seam cube -->
<path d="M1093.2 42.5 H1109 V58.4 H1093.2 Z M1093.2 42.5 L1101.2 34.5 H1116.8 L1109 42.5 M1116.8 34.5 V50.4 L1109 58.4"/>
<path d="M1097.6 44.2 L1099.4 46.2 L1099 49 L1101 52 L1101.4 54.6 L1102.6 57" stroke-width="0.8" stroke-dasharray="1.4 1"/>
<!-- 16 text -->
<path d="M1126.4 34.8 H1145 V38.8 H1138.5 V58 H1133.8 V38.8 H1126.4 Z" stroke="#555" stroke-width="1.1"/>
<text x="1140.6" y="58.4" font-family="Liberation Sans, sans-serif" font-size="13.5" fill="#858585" stroke="none">a</text>
<!-- 17 paint bucket -->
<path d="M1170.6 35.8 L1180.6 45.2 L1169.4 57.2 L1159 47.3 Z"/><path d="M1161.6 45 H1180.2" stroke-width="0.9"/>
<path d="M1161.8 34.6 L1169.6 42.4" stroke="#222" stroke-width="2.4" stroke-linecap="butt"/>
<path d="M1181.3 48.8 Q1184.8 53.6 1184.8 56 A3.5 3.5 0 0 1 1177.8 56 Q1177.8 53.6 1181.3 48.8 Z"/>
<!-- 18 ruler -->
<rect x="1194.5" y="41.3" width="22" height="10.2" stroke="#555" stroke-width="1.1"/><path d="M1197 41.6 V44.6 M1199.4 41.6 V43.6 M1201.8 41.6 V44.6 M1204.2 41.6 V43.6 M1206.6 41.6 V44.6 M1209 41.6 V43.6 M1211.4 41.6 V44.6 M1213.8 41.6 V43.6" stroke="#555" stroke-width="0.9" stroke-linecap="butt"/>
<!-- 19 assemble disabled -->
<g stroke="#d2d2d2" stroke-width="0.9"><rect x="1229.6" y="50.4" width="22" height="7.2"/><path d="M1238.6 36 L1247.6 39.8 L1245.6 44.4 L1236.6 40.6 Z"/><path d="M1234.4 45.6 H1245.6 V50" stroke-dasharray="1.4 1.2"/><path d="M1233.8 41.4 L1228 44 L1229.6 48.6 L1232.6 44.6"/></g>
<!-- 20 corners -->
<g stroke="#333"><circle cx="1264.6" cy="39.4" r="3.4" fill="#cfcfcf" stroke-width="0.8"/><circle cx="1279" cy="39.4" r="3.4" fill="#cfcfcf" stroke-width="0.8"/><circle cx="1264.6" cy="54" r="3.4" fill="#cfcfcf" stroke-width="0.8"/><circle cx="1279" cy="54" r="3.4" fill="#cfcfcf" stroke-width="0.8"/><rect x="1264.6" y="39.4" width="14.4" height="14.6" fill="#fafafa" stroke-width="1.4"/></g>
<!-- 21 puzzle -->
<g stroke="#333" stroke-width="1">
<path d="M1314.4 49 V40.1 H1324.4" stroke="#8a8a8a" stroke-width="1.2"/>
<path d="M1324.4 40.1 C1323.4 41.6 1322 42.8 1322.4 44 C1322.9 45.4 1325.6 44.6 1325.4 46 C1325.2 47.4 1324.4 48 1324.4 49"/>
<path d="M1314.4 49 H1316.9 C1318 49 1318.4 51.2 1320 51.2 C1321.6 51.2 1322 49 1323.1 49 H1324.4"/>
<path d="M1324.4 49 C1324.4 51.4 1326.6 52.4 1326.6 54.2 C1326.6 56 1324.4 55.6 1324.4 58.7"/>
<path d="M1314.4 49 V58.7 H1333.8 V49 H1330 C1331.2 47.8 1330.4 46.8 1329.2 46.8 C1327.8 46.8 1327 47.8 1326.4 48.8"/>
<path d="M1326.3 40.6 L1327.6 39.2 C1326.6 37.4 1328.8 35.4 1330.4 36.4 L1332.2 34.2 L1338.7 40.3 L1332.8 46.9 L1331 45.2 C1332 43.6 1329.8 42 1328.4 43 Z" fill="#fafafa"/>
</g>
</svg>

<!-- scale panel -->
<div class="a" style="left:922px;top:65.5px;width:319px;height:112.3px;background:#fff;border-radius:2px"></div>
<div class="a" style="left:932px;top:71.3px;width:120px;height:15.5px;border:1px solid #cfcfcf;border-radius:2px;background:#fff"></div>
<div class="a" style="left:1057px;top:90.4px;width:41.3px;height:15px;border:1px solid #cfcfcf;border-radius:2px;background:#fff"></div>
<div class="a" style="left:1103px;top:90.4px;width:41.3px;height:15px;border:1px solid #cfcfcf;border-radius:2px;background:#fff"></div>
<div class="a" style="left:1149.3px;top:90.4px;width:41.3px;height:15px;border:1px solid #cfcfcf;border-radius:2px;background:#fff"></div>
<div class="a" style="left:1057px;top:109.3px;width:41.3px;height:15px;border:1px solid #4cc47a;border-radius:2px;background:#fff"></div>
<div class="a" style="left:1103px;top:109.3px;width:41.3px;height:15px;border:1px solid #cfcfcf;border-radius:2px;background:#fff"></div>
<div class="a" style="left:1149.3px;top:109.3px;width:41.3px;height:15px;border:1px solid #cfcfcf;border-radius:2px;background:#fff"></div>
<div class="a" style="left:929px;top:128px;width:306px;height:1px;background:#e6e6e6"></div>
<div class="a" style="left:1050.2px;top:106.3px;width:44.3px;height:23.2px;border:3px solid #d81e25"></div>
<div class="a" style="left:1071.5px;top:112.5px;width:1px;height:9.5px;background:#555"></div>
<div class="a" style="left:935px;top:133.3px;width:11.7px;height:11.7px;border-radius:2px;background:#00ae42"></div>
<!-- object info -->
<div class="a" style="left:1308px;top:772.4px;width:284.6px;height:56.6px;border:1px solid #8fd0a8;border-radius:4px;background:#fff;overflow:hidden"><div class="a" style="left:-1px;top:-1px;width:6.5px;height:58px;background:#009a3c"></div></div>
<div class="a" style="left:1567px;top:777.6px;width:18px;height:18px;border-radius:9px;background:#ededed"></div>
<div class="a" style="left:1575.5px;top:815px;width:9px;height:9px;border-radius:4.5px;background:#ededed"></div>
<!-- camera btn -->
<div class="a" style="left:422.9px;top:796.4px;width:27px;height:27px;border-radius:13.5px;background:#fff"></div>
<svg class="a" style="left:0;top:0" width="1600" height="835" viewBox="0 0 1600 835" fill="none" stroke-linecap="round" stroke-linejoin="round">
<!-- collapse -->
<path d="M321 32.8 L319.3 34.9 L321 37 M324.8 32.8 L326.5 34.9 L324.8 37" stroke="#3a3a3a" stroke-width="0.9"/><path d="M322.9 32.2 V37.6" stroke="#3a3a3a" stroke-width="0.9" stroke-linecap="butt"/>
<!-- return arrow -->
<path d="M367.4 49 H374 A4.1 4.1 0 0 1 374 57.2 H371.4" stroke="#f4f4f4" stroke-width="1.3"/><path d="M369.8 46.6 L367.2 49 L369.8 51.4" stroke="#f4f4f4" stroke-width="1.3"/>
<!-- world coords chevron -->
<path d="M936.6 78.4 L940.2 80.8 L943.8 78.4" stroke="#333" stroke-width="1"/>
<!-- uniform check -->
<path d="M937.6 139.4 L940 141.9 L944.4 136.6" stroke="#fff" stroke-width="1.5"/>
<!-- keyboard -->
<rect x="937.4" y="158.4" width="15.2" height="8.8" rx="1.6" fill="#c4ebd3" stroke="#58c285" stroke-width="0.9"/>
<path d="M939.4 160.8 H950.6 M939.4 162.8 H950.6" stroke="#2fae63" stroke-width="1" stroke-dasharray="1.3 1" stroke-linecap="butt"/><path d="M941.4 165 H948.6" stroke="#2fae63" stroke-width="1" stroke-linecap="butt"/>
<!-- info close -->
<path d="M1571.6 782.2 L1580.4 791 M1580.4 782.2 L1571.6 791" stroke="#8a8a8a" stroke-width="1.1"/>
<path d="M1577.4 819.5 H1582.6" stroke="#8a8a8a" stroke-width="1"/>
<!-- camera -->
<g stroke="#4a4a4a" stroke-width="1.2"><path d="M429.4 806 V803.6 Q429.4 802.8 430.2 802.8 H432.6 M440.2 802.8 H442.6 Q443.4 802.8 443.4 803.6 V806 M443.4 813.8 V816.2 Q443.4 817 442.6 817 H440.2 M432.6 817 H430.2 Q429.4 817 429.4 816.2 V813.8"/>
<path d="M436.4 805.6 L440.2 807.7 V812.1 L436.4 814.2 L432.6 812.1 V807.7 Z M432.8 807.8 L436.4 809.9 L440 807.8 M436.4 809.9 V814"/></g>
</svg>

<!-- right edge shade -->
<div class="a" style="left:1598.6px;top:0;width:1.4px;height:835px;background:rgba(200,200,200,0.85)"></div>

<!-- top bar -->
<div id="topbar" class="a"></div>
<div class="a" style="left:0;top:0;width:1600px;height:1px;background:#1e2526"></div>
<div class="a" style="left:27px;top:1px;width:103px;height:27px;background:#00ae42"></div>
<div class="a" style="left:1348px;top:5px;width:103.5px;height:19px;border-radius:9.5px;background:#00ae42"></div>
<div class="a" style="left:1367px;top:5px;width:1px;height:19px;background:#3b4446"></div>
<div class="a" style="left:1464px;top:5px;width:104px;height:19px;border-radius:9.5px;background:#6b6b6b;overflow:hidden"><div class="a" style="left:0;top:0;width:19.5px;height:19px;background:#00ae42"></div></div>
<svg class="a" style="left:0;top:0" width="1600" height="28" viewBox="0 0 1600 28" fill="none" stroke="#fff" stroke-width="1.15" stroke-linejoin="round" stroke-linecap="round">
<!-- home -->
<path d="M11.6 7 L19.4 14.2 H17.3 V22.6 H13.4 V17.2 H9.8 V22.6 H5.9 V14.2 H3.8 Z" fill="#fff" stroke="none"/>
<!-- prepare cube -->
<path d="M54.5 9.4 L60.3 12.3 V18.3 L54.5 21.2 L48.7 18.3 V12.3 Z M48.9 12.4 L54.5 15.4 L60.1 12.4" stroke="#d8ffe6"/>
<!-- preview layers -->
<path d="M157.7 9 L163.4 11.9 L157.7 14.8 L152 11.9 Z M152 14.7 L157.7 17.6 L163.4 14.7 M152 17.5 L157.7 20.4 L163.4 17.5" stroke-width="1.1"/>
<!-- device -->
<g stroke-width="1.1"><rect x="257.3" y="8.9" width="5.8" height="4.2"/><path d="M260.2 13.1 V15 M258.4 15.2 H262"/><path d="M266.2 9 H270.4 V11.2"/><path d="M257.4 17.8 V20.2 H259.6"/><rect x="265.3" y="15.2" width="5.4" height="5.2"/><path d="M268 15.2 V17.4 M265.3 17.4 H270.7" stroke-width="0.9"/></g>
<!-- project -->
<g stroke-width="1.2"><rect x="359.6" y="9.5" width="12.6" height="10.6" rx="0.8"/><path d="M364 12.3 H370 M364 14.8 H370 M364 17.3 H370" stroke-width="1"/><path d="M361.7 12.3 H362.3 M361.7 14.8 H362.3 M361.7 17.3 H362.3" stroke-width="1"/></g>
<!-- calibration -->
<g stroke-width="1.2"><path d="M457 11 L458.6 10.4 H460.4 L462 11 L463.4 12.6 L463.8 15 L463.4 17.4 L462 19 L460.4 19.6 H458.6 L457 19 L455.6 17.4 L455.2 15 L455.6 12.6 Z" stroke-width="1.3"/><path d="M459.5 17.3 V13.4 M457.7 14.8 L459.5 12.9 L461.3 14.8" stroke-width="1.1"/></g>
<!-- chevrons -->
<path d="M1354.3 13 L1358.3 16.2 L1362.3 13" stroke-width="1.3"/>
<path d="M1470.3 13 L1474.3 16.2 L1478.3 13" stroke-width="1.3"/>
</svg>

<!-- sidebar -->
<div id="side" class="a"></div>
<div class="a" style="left:316px;top:28px;width:1.4px;height:807px;background:#bdbdbd"></div>
<div class="a hdr" style="top:28px;height:24px"></div>
<div class="a card" style="left:1px;top:55px;width:149px;height:77px"></div>
<div class="a card" style="left:154.5px;top:55px;width:76.5px;height:77px"></div>
<div class="a" style="left:235px;top:55px;width:77px;height:77px;border:1px solid #dcdcdc;background:#f5f5f5;border-radius:5px"></div>
<!-- nozzle group -->
<div class="a" style="left:0;top:140px;width:312px;height:40px;border-top:1px solid #eeeeee;border-bottom:1px solid #f2f2f2"></div>
<div class="a" style="left:5px;top:135px;width:28px;height:10px;background:#fff"></div>
<div class="a box" style="left:54px;top:153px;width:102.5px;height:18.5px"></div>
<div class="a box" style="left:189px;top:153px;width:113px;height:18.5px"></div>
<div class="a hdr" style="top:185px;height:24px"></div>
<div class="a" style="left:5.5px;top:227.5px;width:15px;height:15px;border:1px solid #b8b8b8;background:#fff"></div>
<div class="a box" style="left:26px;top:223px;width:259px;height:24.5px"></div>
<div class="a hdr" style="top:262px;height:23.5px"></div>
<div class="a" style="left:72px;top:266px;width:79px;height:15px;border-radius:7.5px;background:#dcdcdc"></div>
<div class="a" style="left:72px;top:266px;width:40.5px;height:15px;border-radius:7.5px;background:#00ae42"></div>
<div class="a" style="left:238.5px;top:267.5px;width:21.5px;height:12.5px;border-radius:6.5px;background:#00ae42"></div>
<div class="a" style="left:249px;top:268.7px;width:10px;height:10px;border-radius:5px;background:#fff"></div>
<div class="a box" style="left:26px;top:295px;width:232.5px;height:18.5px"></div>
<div class="a" style="left:0;top:341px;width:316px;height:1px;background:#e4e4e4"></div>
<div class="a" style="left:4px;top:339px;width:44px;height:2.5px;background:#00ae42;border-radius:1px"></div>
<!-- scroll -->
<div class="a" style="left:303px;top:346.5px;width:13px;height:489px;background:#f0f0f0"></div>
<div class="a" style="left:307.9px;top:360px;width:3.4px;height:198px;background:#7a7a7a;border-radius:1px"></div>
<!-- section lines -->
<div class="a secline" style="left:92px;top:360px;width:203px"></div>
<div class="a secline" style="left:82px;top:436px;width:213px"></div>
<div class="a secline" style="left:53px;top:645px;width:242px"></div>
<!-- inputs -->
<div class="a box" style="left:185.5px;top:374.5px;width:91px;height:18px"></div>
<div class="a box" style="left:185.5px;top:396.5px;width:91px;height:18px"></div>
<div class="a box" style="left:185.5px;top:451px;width:91px;height:18px"></div>
<div class="a box" style="left:185.5px;top:473px;width:91px;height:18px"></div>
<div class="a box" style="left:185.5px;top:495px;width:91px;height:18px"></div>
<div class="a box" style="left:185.5px;top:517px;width:91px;height:18px"></div>
<div class="a box" style="left:185.5px;top:539px;width:91px;height:18px"></div>
<div class="a box" style="left:185.5px;top:561px;width:91px;height:18px"></div>
<div class="a box" style="left:185.5px;top:583px;width:91px;height:18px"></div>
<div class="a box" style="left:185.5px;top:605px;width:91px;height:18px"></div>
<div class="a box" style="left:186px;top:659.5px;width:91px;height:18px"></div>
<div class="a box" style="left:186px;top:710px;width:91px;height:18px"></div>
<div class="a box" style="left:186px;top:761px;width:91px;height:18px"></div>
<div class="a chk" style="left:186.5px;top:684.3px"></div>
<div class="a unchk" style="left:186.5px;top:741.5px"></div>
<div class="a chk" style="left:186.5px;top:785.7px"></div>
<div class="a chk" style="left:186.5px;top:807.9px"></div>
<div class="a" style="left:0;top:833.6px;width:316px;height:1.4px;background:#c4c4c4"></div>
<svg class="a" style="left:0;top:0" width="320" height="835" viewBox="0 0 320 835" fill="none" stroke-linecap="round" stroke-linejoin="round">
<!-- printer header icon -->
<g stroke="#6b6b6b" stroke-width="1.1"><path d="M5.3 37.2 H15.3 V45.6 H5.3 Z M5.3 37.2 L7.6 35.3 H17.6 L15.3 37.2 M17.6 35.3 V43.6 L15.3 45.6"/></g>
<path d="M7 44 L9.6 42.3 L11 43 L13.6 40.2 V44 Z" fill="#00ae42"/>
<path d="M7.4 39 H13" stroke="#9fd9b5" stroke-width="1"/>
<!-- gear (printer) -->
<g stroke="#262e30" stroke-width="1.25" transform="translate(297.6 40.4) scale(0.9) translate(-296.8 -40.6)"><path d="M296.8 34.6 l1.6 0 l0.5 1.6 l1.3 0.6 l1.5 -0.8 l1.2 1.2 l-0.8 1.5 l0.6 1.3 l1.6 0.5 l0 1.6 l-1.6 0.5 l-0.6 1.3 l0.8 1.5 l-1.2 1.2 l-1.5 -0.8 l-1.3 0.6 l-0.5 1.6 l-1.6 0 l-0.5 -1.6 l-1.3 -0.6 l-1.5 0.8 l-1.2 -1.2 l0.8 -1.5 l-0.6 -1.3 l-1.6 -0.5 l0 -1.6 l1.6 -0.5 l0.6 -1.3 l-0.8 -1.5 l1.2 -1.2 l1.5 0.8 l1.3 -0.6 Z" transform="translate(-0.8 -0.2)"/><circle cx="296.8" cy="40.6" r="2"/></g>
<!-- printer thumbnail -->
<rect x="57.4" y="69" width="23.5" height="29.6" fill="#bdbdbd" rx="0.8"/>
<path d="M80.9 69 L88.8 69.6 V98 L80.9 98.6 Z" fill="#dedede"/>
<rect x="85.3" y="79.5" width="1.2" height="5.2" fill="#9a9a9a"/>
<rect x="60" y="67.2" width="7.6" height="5" fill="#2c2c2c" rx="0.6"/>
<rect x="58.9" y="72.6" width="21" height="24.2" fill="#161616"/>
<rect x="60.2" y="75.6" width="3.6" height="1.6" fill="#e6e6e6"/>
<path d="M60.8 79 V96 M60.8 88.3 H79 M72.5 74 V78 M73 75 H78" stroke="#4a4a4a" stroke-width="0.8"/>
<path d="M77.3 83.5 H79.8" stroke="#999" stroke-width="1"/>
<!-- bed thumbnail -->
<rect x="188.4" y="67.3" width="8" height="3" fill="#c7aa73" rx="0.8"/>
<rect x="175.9" y="68.8" width="34" height="34.9" fill="#c9a55e"/>
<path d="M192.5 78 V94 M197 80 V92" stroke="#d7b877" stroke-width="0.8"/>
<rect x="186" y="103" width="14" height="1" fill="#b99650"/>
<!-- info -->
<circle cx="218.5" cy="71.7" r="4.2" stroke="#3a3a3a" stroke-width="0.9"/><path d="M218.5 71 V74 M217.7 74 H219.4 M217.8 71 H218.5" stroke="#3a3a3a" stroke-width="0.9"/><circle cx="218.5" cy="69.5" r="0.55" fill="#3a3a3a"/>
<!-- sync -->
<g stroke="#262e30" stroke-width="1.5"><path d="M265.6 76.5 A8.3 8.3 0 0 1 281.3 75"/><path d="M281.9 79.6 A8.3 8.3 0 0 1 266.2 81.2"/></g>
<path d="M278.6 76.6 L285.2 74.2 L282.6 79.8 Z" fill="#262e30"/><path d="M268.9 79.5 L262.2 82 L264.8 76.4 Z" fill="#262e30"/>
<!-- green corner triangles -->
<path d="M136.5 55.3 H146 Q150.5 55.3 150.5 60 V69.3 Z" fill="#00ae42"/><path d="M143.6 59.3 L145.5 61.2 L149 57.6" stroke="#d9ffe6" stroke-width="0.9"/>
<path d="M298.5 141 H312.7 V154.8 Z" fill="#00ae42"/><path d="M305.4 146 L307.3 147.9 L310.8 144.3" stroke="#d9ffe6" stroke-width="0.9"/>
<path d="M271.2 223.5 H283.5 Q285.5 223.5 285.5 225.5 V237.8 Z" fill="#00ae42"/><path d="M278.2 228.6 L280.1 230.5 L283.6 226.9" stroke="#d9ffe6" stroke-width="0.9"/>
<!-- chevrons -->
<g stroke="#b4b4b4" stroke-width="1"><path d="M12 112.5 L16.3 115.8 L20.6 112.5"/><path d="M161.2 114.3 L165.2 117.3 L169.2 114.3"/>
<path d="M59.3 160.8 L63.3 163.8 L67.3 160.8"/><path d="M194.7 160.8 L198.7 163.8 L202.7 160.8"/>
<path d="M32 234 L36 237 L40 234"/><path d="M32 302.7 L36 305.7 L40 302.7"/><path d="M191 667 L195 669.9 L199 667"/>
<path d="M189.2 716.4 L192.4 713.2 L195.6 716.4 M189.2 721.6 L192.4 724.8 L195.6 721.6"/><path d="M189.2 767.4 L192.4 764.2 L195.6 767.4 M189.2 772.6 L192.4 775.8 L195.6 772.6"/></g>
<!-- filaments icon -->
<g stroke-width="1"><ellipse cx="8.6" cy="196.6" rx="1.7" ry="5.2" stroke="#6b6b6b"/><ellipse cx="12.5" cy="196.6" rx="1.7" ry="5.2" stroke="#00ae42"/><ellipse cx="16.2" cy="196.6" rx="1.7" ry="5.2" stroke="#6b6b6b"/><path d="M10.5 192 V201 M14.4 192 V201" stroke="#00ae42" stroke-width="0.8"/></g>
<!-- plus minus -->
<g stroke="#262e30" stroke-width="1.3" stroke-linecap="butt"><path d="M224 196.9 H233.4 M228.7 192.2 V201.6"/><path d="M245.8 196.9 H255.2"/></g>
<!-- spool sync -->
<g stroke="#4a4f51" stroke-width="1"><path d="M267.6 193.6 L268.6 191 H278 L279 193.6 Z M267.6 193.6 V202.4 H273.5"/><path d="M270.8 191.2 V193.4 M273.2 191.2 V193.4 M275.6 191.2 V193.4" stroke-width="0.8"/><rect x="268.2" y="196.5" width="4.6" height="5.6" stroke-width="0.9"/><circle cx="276.8" cy="199.3" r="3.6" fill="#f7f7f7"/><path d="M275 198.6 H278.6 M278.4 200.1 H274.9" stroke-width="0.7"/></g>
<g stroke="#262e30" stroke-width="1.25" transform="translate(296.8 196.9) scale(0.9) translate(-296.8 -40.6)"><path d="M296.8 34.6 l1.6 0 l0.5 1.6 l1.3 0.6 l1.5 -0.8 l1.2 1.2 l-0.8 1.5 l0.6 1.3 l1.6 0.5 l0 1.6 l-1.6 0.5 l-0.6 1.3 l0.8 1.5 l-1.2 1.2 l-1.5 -0.8 l-1.3 0.6 l-0.5 1.6 l-1.6 0 l-0.5 -1.6 l-1.3 -0.6 l-1.5 0.8 l-1.2 -1.2 l0.8 -1.5 l-0.6 -1.3 l-1.6 -0.5 l0 -1.6 l1.6 -0.5 l0.6 -1.3 l-0.8 -1.5 l1.2 -1.2 l1.5 0.8 l1.3 -0.6 Z" transform="translate(-0.8 -0.2)"/><circle cx="296.8" cy="40.6" r="2"/></g>
<!-- filament swatch -->
<rect x="47" y="230" width="8.8" height="10.8" fill="#2a2e30"/><path d="M51.4 230 V240.8" stroke="#fff" stroke-width="1.1" stroke-linecap="butt"/><path d="M47.5 236.2 L55.3 234.6" stroke="#8a8c8d" stroke-width="0.5"/>
<!-- circle minus -->
<circle cx="296.8" cy="235.6" r="5.5" stroke="#262e30" stroke-width="1.2"/><path d="M294.2 235.6 H299.4" stroke="#262e30" stroke-width="1.1"/>
<!-- process icon -->
<g stroke="#6b6b6b" stroke-width="1.1"><path d="M8.2 268.8 H17.8 L15.8 273.2 H6.2 Z"/><path d="M6.3 275.6 H15.8 L17.8 271.4"/><path d="M6.3 278.4 H15.8 L17.8 274.2"/></g><path d="M6.5 275.7 H15.6" stroke="#00ae42" stroke-width="1.1"/>
<!-- list & compare -->
<g stroke="#262e30" stroke-width="1.2" stroke-linecap="butt"><path d="M272.6 269.9 H280.2 M272.6 273.4 H280.2 M272.6 276.9 H280.2"/><path d="M269.3 269.9 H270.7 M269.3 273.4 H270.7 M269.3 276.9 H270.7"/></g>
<g stroke="#262e30" stroke-width="1.1"><path d="M300.6 268.8 L293 278.2"/><path d="M291.4 270.6 H297 M295.2 268.7 L297.1 270.6 L295.2 272.5"/><path d="M302.3 276.2 H296.7 M298.5 274.3 L296.6 276.2 L298.5 278.1"/></g>
<!-- save & search -->
<g stroke="#6e7374" stroke-width="1.1"><path d="M270 299.6 H276.6 L279 302 V309.4 H270 Z M271.8 309.2 V305.6 H277.2 V309.2 M272.4 299.8 V302.2 H275.6"/></g>
<g stroke="#3c4244" stroke-width="1.2"><circle cx="295.6" cy="303" r="3.9"/><path d="M298.5 306 L302.2 309.9"/></g>
<!-- section icons -->
<g fill="#5d6264"><path d="M5 356.9 Q5 354.6 7.4 354.6 H14 Q16.4 354.6 16.4 356.9 Z"/><rect x="4.4" y="357.8" width="12.6" height="1.7"/><rect x="4.4" y="360.3" width="12.6" height="1.7"/><rect x="4.4" y="362.8" width="12.6" height="1.7"/><rect x="4.4" y="365.2" width="12.6" height="0.9"/></g>
<g><rect x="4.6" y="432" width="12.4" height="3.4" fill="#8b8f90" stroke="#4a4f51" stroke-width="0.8"/><path d="M5 437 V441.3 M16.6 437 V441.3 M5 438.9 H16.6" stroke="#4a4f51" stroke-width="1" stroke-linecap="butt"/></g>
<g><rect x="5.2" y="639.8" width="10.8" height="10.8" fill="#d4d4d4" stroke="#4a4f51" stroke-width="1"/><path d="M7.2 648.4 L8.4 646 L10.8 644.6 L12 642.4 L14 641.8" stroke="#6d7273" stroke-width="0.8" stroke-dasharray="1.3 0.9"/></g>
<!-- check marks -->
<g stroke="#fff" stroke-width="1.4"><path d="M189.5 690.9 L192 693.4 L196.6 688.6"/><path d="M189.5 792.3 L192 794.8 L196.6 790"/><path d="M189.5 814.5 L192 817 L196.6 812.2"/></g>
</svg>


<span class="t" style="left:69px;top:8px;font-size:12px;color:#fff;letter-spacing:-0.243px;">Prepare</span>
<span class="t" style="left:172px;top:8px;font-size:12px;color:#fff;letter-spacing:-0.241px;">Preview</span>
<span class="t" style="left:278.2px;top:8px;font-size:12px;color:#fff;letter-spacing:-0.415px;">Device</span>
<span class="t" style="left:379.5px;top:8px;font-size:12px;color:#fff;letter-spacing:-0.080px;">Project</span>
<span class="t" style="left:473.2px;top:8px;font-size:12px;color:#fff;letter-spacing:-0.070px;">Calibration</span>
<span class="t" style="left:1380px;top:8px;font-size:12px;color:#fff;letter-spacing:-0.216px;">Slice plate</span>
<span class="t" style="left:1496px;top:8px;font-size:12px;color:#a3a3a3;">Print plate</span>
<span class="t" style="left:25px;top:33px;font-size:12px;color:#262e30;letter-spacing:-0.049px;">Printer</span>
<span class="t" style="left:25.5px;top:108px;font-size:12px;color:#262e30;letter-spacing:-0.215px;">Bambu Lab X1 Carbon</span>
<span class="t" style="left:174.5px;top:109px;font-size:12px;color:#262e30;letter-spacing:-0.286px;">Texture...</span>
<span class="t" style="left:242px;top:95px;font-size:12px;color:#262e30;letter-spacing:-0.169px;">Sync printer</span>
<span class="t" style="left:242px;top:108px;font-size:12px;color:#262e30;letter-spacing:0.057px;">information</span>
<span class="t" style="left:6.5px;top:134px;font-size:8.9px;color:#c4c4c4;letter-spacing:-0.450px;">Nozzle</span>
<span class="t" style="left:4.5px;top:155px;font-size:12px;color:#262e30;letter-spacing:-0.148px;">Diameter</span>
<span class="t" style="left:72.5px;top:156px;font-size:12px;color:#262e30;letter-spacing:-0.396px;">0.4</span>
<span class="t" style="left:163px;top:155px;font-size:12px;color:#262e30;letter-spacing:-0.336px;">Flow</span>
<span class="t" style="left:207.5px;top:156px;font-size:12px;color:#262e30;letter-spacing:-0.150px;">Standard</span>
<span class="t" style="left:26.5px;top:190px;font-size:12px;color:#262e30;letter-spacing:-0.218px;">Project Filaments</span>
<span class="t" style="left:10.2px;top:228px;font-size:12px;color:#262e30;font-weight:bold;">1</span>
<span class="t" style="left:59.5px;top:228px;font-size:11px;color:#262e30;letter-spacing:-0.238px;">PLA Basic</span>
<span class="t" style="left:26.5px;top:267px;font-size:11.8px;color:#262e30;letter-spacing:-0.450px;">Process</span>
<span class="t" style="left:79px;top:267px;font-size:10px;color:#fff;letter-spacing:-0.234px;">Global</span>
<span class="t" style="left:114.5px;top:267px;font-size:10px;color:#8c8c8c;letter-spacing:-0.201px;">Objects</span>
<span class="t" style="left:185px;top:267px;font-size:12px;color:#262e30;letter-spacing:-0.297px;">Advanced</span>
<span class="t" style="left:44.5px;top:298px;font-size:12px;color:#262e30;letter-spacing:-0.305px;">0.20mm Standard @BBL X1C</span>
<span class="t" style="left:6.5px;top:325px;font-size:12px;color:#262e30;font-weight:bold;letter-spacing:-0.170px;">Quality</span>
<span class="t" style="left:65px;top:325px;font-size:12px;color:#6b6b6b;letter-spacing:0.016px;">Strength</span>
<span class="t" style="left:129.3px;top:325px;font-size:12px;color:#6b6b6b;letter-spacing:-0.401px;">Speed</span>
<span class="t" style="left:181.5px;top:325px;font-size:12px;color:#6b6b6b;letter-spacing:0.038px;">Support</span>
<span class="t" style="left:243.5px;top:325px;font-size:12px;color:#6b6b6b;letter-spacing:-0.086px;">Others</span>
<span class="t" style="left:20.5px;top:353px;font-size:12px;color:#262e30;font-weight:bold;letter-spacing:-0.280px;">Layer height</span>
<span class="t" style="left:19px;top:377px;font-size:12px;color:#262e30;letter-spacing:-0.171px;">Layer height</span>
<span class="t" style="left:19px;top:399px;font-size:12px;color:#262e30;letter-spacing:-0.095px;">Initial layer height</span>
<span class="t" style="left:21.5px;top:430px;font-size:12px;color:#262e30;font-weight:bold;letter-spacing:-0.233px;">Line width</span>
<span class="t" style="left:19px;top:453px;font-size:12px;color:#262e30;letter-spacing:-0.076px;">Default</span>
<span class="t" style="left:19px;top:475px;font-size:12px;color:#262e30;letter-spacing:-0.120px;">Initial layer</span>
<span class="t" style="left:19px;top:497px;font-size:12px;color:#262e30;letter-spacing:-0.053px;">Outer wall</span>
<span class="t" style="left:19px;top:519px;font-size:12px;color:#262e30;letter-spacing:-0.186px;">Inner wall</span>
<span class="t" style="left:19px;top:541px;font-size:12px;color:#262e30;letter-spacing:-0.095px;">Top surface</span>
<span class="t" style="left:19px;top:563px;font-size:12px;color:#262e30;letter-spacing:-0.310px;">Sparse infill</span>
<span class="t" style="left:19px;top:585px;font-size:12px;color:#262e30;letter-spacing:-0.074px;">Internal solid infill</span>
<span class="t" style="left:19px;top:607px;font-size:12px;color:#262e30;letter-spacing:-0.004px;">Support</span>
<span class="t" style="left:190.5px;top:377px;font-size:11.76px;color:#262e30;letter-spacing:-0.450px;">0.2</span>
<span class="t" style="left:254px;top:378px;font-size:10px;color:#8f8f8f;letter-spacing:-0.336px;">mm</span>
<span class="t" style="left:190.5px;top:399px;font-size:11.76px;color:#262e30;letter-spacing:-0.450px;">0.2</span>
<span class="t" style="left:254px;top:400px;font-size:10px;color:#8f8f8f;letter-spacing:-0.336px;">mm</span>
<span class="t" style="left:190.5px;top:454px;font-size:11.97px;color:#262e30;letter-spacing:-0.450px;">0.42</span>
<span class="t" style="left:254px;top:455px;font-size:10px;color:#8f8f8f;letter-spacing:-0.336px;">mm</span>
<span class="t" style="left:190.5px;top:476px;font-size:11.76px;color:#262e30;letter-spacing:-0.450px;">0.5</span>
<span class="t" style="left:254px;top:477px;font-size:10px;color:#8f8f8f;letter-spacing:-0.336px;">mm</span>
<span class="t" style="left:190.5px;top:498px;font-size:11.97px;color:#262e30;letter-spacing:-0.450px;">0.42</span>
<span class="t" style="left:254px;top:499px;font-size:10px;color:#8f8f8f;letter-spacing:-0.336px;">mm</span>
<span class="t" style="left:190.5px;top:520px;font-size:11.97px;color:#262e30;letter-spacing:-0.450px;">0.45</span>
<span class="t" style="left:254px;top:521px;font-size:10px;color:#8f8f8f;letter-spacing:-0.336px;">mm</span>
<span class="t" style="left:190.5px;top:542px;font-size:11.97px;color:#262e30;letter-spacing:-0.450px;">0.42</span>
<span class="t" style="left:254px;top:543px;font-size:10px;color:#8f8f8f;letter-spacing:-0.336px;">mm</span>
<span class="t" style="left:190.5px;top:564px;font-size:11.97px;color:#262e30;letter-spacing:-0.450px;">0.45</span>
<span class="t" style="left:254px;top:565px;font-size:10px;color:#8f8f8f;letter-spacing:-0.336px;">mm</span>
<span class="t" style="left:190.5px;top:586px;font-size:11.97px;color:#262e30;letter-spacing:-0.450px;">0.42</span>
<span class="t" style="left:254px;top:587px;font-size:10px;color:#8f8f8f;letter-spacing:-0.336px;">mm</span>
<span class="t" style="left:190.5px;top:608px;font-size:11.97px;color:#262e30;letter-spacing:-0.450px;">0.42</span>
<span class="t" style="left:254px;top:609px;font-size:10px;color:#8f8f8f;letter-spacing:-0.336px;">mm</span>
<span class="t" style="left:20.4px;top:639px;font-size:11.46px;color:#262e30;font-weight:bold;letter-spacing:-0.450px;">Seam</span>
<span class="t" style="left:19px;top:662px;font-size:12px;color:#262e30;letter-spacing:-0.219px;">Seam position</span>
<span class="t" style="left:19px;top:684px;font-size:12px;color:#262e30;letter-spacing:-0.162px;">Smart scarf seam application</span>
<span class="t" style="left:19px;top:706px;font-size:12px;color:#262e30;letter-spacing:-0.140px;">Scarf application angle</span>
<span class="t" style="left:19px;top:719px;font-size:12px;color:#262e30;letter-spacing:-0.075px;">threshold</span>
<span class="t" style="left:19px;top:741px;font-size:12px;color:#262e30;letter-spacing:-0.112px;">Scarf around entire wall</span>
<span class="t" style="left:19px;top:764px;font-size:12px;color:#262e30;letter-spacing:-0.230px;">Scarf steps</span>
<span class="t" style="left:19px;top:786px;font-size:12px;color:#262e30;letter-spacing:-0.101px;">Scarf joint for inner walls</span>
<span class="t" style="left:19px;top:808px;font-size:12px;color:#262e30;letter-spacing:-0.134px;">Role-based wipe speed</span>
<span class="t" style="left:204.2px;top:663px;font-size:12px;color:#262e30;letter-spacing:-0.204px;">Aligned</span>
<span class="t" style="left:202.6px;top:713px;font-size:11.59px;color:#262e30;letter-spacing:-0.450px;">155</span>
<span class="t" style="left:270px;top:711px;font-size:9px;color:#8f8f8f;">°</span>
<span class="t" style="left:202.6px;top:764px;font-size:11.23px;color:#262e30;letter-spacing:-0.450px;">10</span>
<span class="t" style="left:383.1px;top:46px;font-size:10.5px;color:#f6f6f6;letter-spacing:-0.056px;">return</span>
<span class="t" style="left:950.4px;top:73px;font-size:10px;color:#262e30;letter-spacing:0.069px;">World coordinates</span>
<span class="t" style="left:1074.3px;top:73px;font-size:10px;color:#e02020;">X</span>
<span class="t" style="left:1120.5px;top:73px;font-size:10px;color:#20a040;">Y</span>
<span class="t" style="left:1166.2px;top:73px;font-size:10px;color:#3030d0;">Z</span>
<span class="t" style="left:934.9px;top:92px;font-size:10px;color:#262e30;letter-spacing:-0.203px;">Scale</span>
<span class="t" style="left:934.9px;top:111px;font-size:10px;color:#262e30;letter-spacing:-0.263px;">Size</span>
<span class="t" style="left:1060px;top:92px;font-size:10px;color:#262e30;letter-spacing:-0.182px;">100.00</span>
<span class="t" style="left:1106px;top:92px;font-size:10px;color:#262e30;letter-spacing:-0.182px;">100.00</span>
<span class="t" style="left:1152.3px;top:92px;font-size:10px;color:#262e30;letter-spacing:-0.182px;">100.00</span>
<span class="t" style="left:1059.7px;top:111px;font-size:10px;color:#262e30;letter-spacing:-0.062px;">50</span>
<span class="t" style="left:1106px;top:111px;font-size:10px;color:#262e30;letter-spacing:-0.206px;">58.00</span>
<span class="t" style="left:1152.3px;top:111px;font-size:10px;color:#262e30;letter-spacing:-0.242px;">3.00</span>
<span class="t" style="left:1195.8px;top:92px;font-size:10px;color:#262e30;">%</span>
<span class="t" style="left:1195.8px;top:111px;font-size:9.84px;color:#262e30;letter-spacing:-0.450px;">mm</span>
<span class="t" style="left:948.9px;top:133px;font-size:10px;color:#262e30;letter-spacing:-0.051px;">uniform scale</span>
<span class="t" style="left:1319.6px;top:777px;font-size:10.5px;color:#262e30;letter-spacing:-0.407px;">Object name: Train_Bambulab.STL</span>
<span class="t" style="left:1319.6px;top:789px;font-size:10.5px;color:#262e30;letter-spacing:-0.427px;">Size: 90 x 58 x 3 mm</span>
<span class="t" style="left:1319.6px;top:800px;font-size:10.5px;color:#262e30;letter-spacing:-0.354px;">Volume: 10519.9 mm³</span>
<span class="t" style="left:1319.6px;top:812px;font-size:10.5px;color:#262e30;letter-spacing:-0.333px;">Triangles: 1222</span>
</div></body></html>
